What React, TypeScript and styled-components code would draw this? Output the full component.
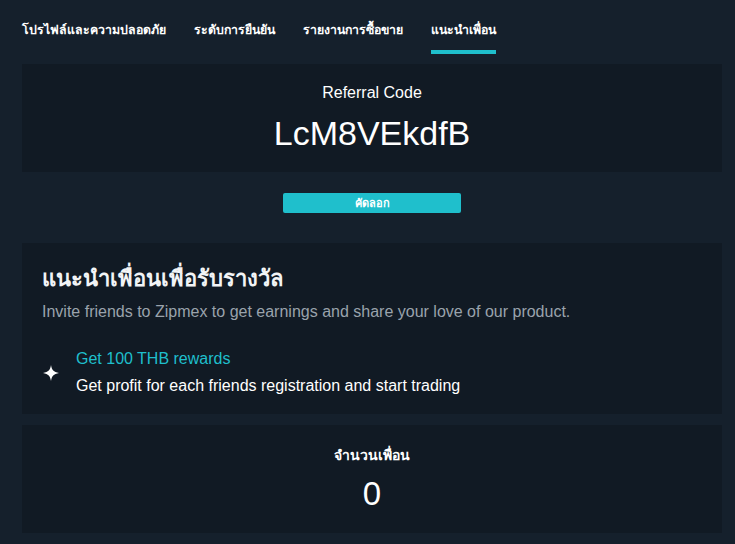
import React from "react";
import styled, { createGlobalStyle } from "styled-components";

const GlobalStyle = createGlobalStyle`
  html, body {
    margin: 0;
    padding: 0;
    background: #15202c;
  }
  body {
    font-family: "Liberation Sans", Arial, "Noto Sans", sans-serif;
    color: #ffffff;
  }
  * {
    box-sizing: border-box;
  }
`;

const tabs = [
  "โปรไฟล์และความปลอดภัย",
  "ระดับการยืนยัน",
  "รายงานการซื้อขาย",
  "แนะนำเพื่อน",
];

const Page = styled.div`
  width: 735px;
  min-height: 544px;
  padding: 0 13px 0 22px;
  display: flex;
  flex-direction: column;
`;

const TabBar = styled.nav`
  height: 64px;
  display: flex;
  align-items: flex-start;
  gap: 28px;
`;

const Tab = styled.div<{ active?: boolean }>`
  height: 54px;
  padding-top: 20px;
  font-family: "Noto Sans", "Liberation Sans", sans-serif;
  font-size: 12.3px;
  font-weight: 700;
  color: #ffffff;
  border-bottom: 4px solid ${({ active }) => (active ? "#1fbfcc" : "transparent")};
  white-space: nowrap;
`;

const Card = styled.section<{ align?: string }>`
  background: #111a24;
  display: flex;
  flex-direction: column;
  align-items: ${({ align }) => align || "center"};
`;

const CodeCard = styled(Card)`
  height: 108px;
  padding-top: 20px;
`;

const Label = styled.div`
  font-size: 16px;
  color: #ffffff;
  line-height: 18px;
`;

const Code = styled.div`
  font-size: 34px;
  line-height: 40px;
  margin-top: 11px;
  color: #ffffff;
`;

const ButtonRow = styled.div`
  height: 71px;
  display: flex;
  justify-content: center;
  padding-top: 21px;
`;

const CopyButton = styled.button`
  width: 178px;
  height: 20px;
  border: none;
  border-radius: 2px;
  background: #1fbfcc;
  color: #ffffff;
  font-family: "Noto Sans", "Liberation Sans", sans-serif;
  font-size: 11px;
  font-weight: 700;
  padding: 0;
  line-height: 20px;
`;

const InviteCard = styled(Card)`
  height: 171px;
  padding: 20px 20px 0 20px;
`;

const Heading = styled.h2`
  margin: 0;
  font-family: "Noto Sans", "Liberation Sans", sans-serif;
  font-size: 22px;
  font-weight: 700;
  line-height: 28px;
  color: #f2f4f6;
`;

const Sub = styled.p`
  margin: 12px 0 0;
  font-size: 16px;
  line-height: 18px;
  color: #9aa3ac;
`;

const Perk = styled.div`
  display: flex;
  align-items: center;
  gap: 16px;
  margin-top: 29px;
`;

const PerkText = styled.div`
  display: flex;
  flex-direction: column;
  gap: 9px;
`;

const PerkTitle = styled.div`
  font-size: 16px;
  line-height: 18px;
  color: #1fbfcc;
`;

const PerkBody = styled.div`
  font-size: 16px;
  line-height: 18px;
  color: #ffffff;
`;

const FriendsCard = styled(Card)`
  height: 108px;
  margin-top: 11px;
  padding-top: 20px;
`;

const FriendsLabel = styled.div`
  font-family: "Noto Sans", "Liberation Sans", sans-serif;
  font-size: 14px;
  font-weight: 700;
  line-height: 20px;
  color: #ffffff;
`;

const Count = styled.div`
  font-size: 33px;
  line-height: 38px;
  margin-top: 10px;
  color: #ffffff;
`;

const Sparkle = () => (
  <svg width="18" height="18" viewBox="0 0 18 18">
    <path
      d="M9 1 C9.8 6 11.5 8 17 9 C11.5 10 9.8 12 9 17 C8.2 12 6.5 10 1 9 C6.5 8 8.2 6 9 1 Z"
      fill="#ffffff"
    />
  </svg>
);

const App: React.FC = () => {
  return (
    <>
      <GlobalStyle />
      <Page>
        <TabBar>
          {tabs.map((t, i) => (
            <Tab key={t} active={i === tabs.length - 1}>
              {t}
            </Tab>
          ))}
        </TabBar>
        <CodeCard>
          <Label>Referral Code</Label>
          <Code>LcM8VEkdfB</Code>
        </CodeCard>
        <ButtonRow>
          <CopyButton>คัดลอก</CopyButton>
        </ButtonRow>
        <InviteCard align="flex-start">
          <Heading>แนะนำเพื่อนเพื่อรับรางวัล</Heading>
          <Sub>
            Invite friends to Zipmex to get earnings and share your love of our
            product.
          </Sub>
          <Perk>
            <Sparkle />
            <PerkText>
              <PerkTitle>Get 100 THB rewards</PerkTitle>
              <PerkBody>
                Get profit for each friends registration and start trading
              </PerkBody>
            </PerkText>
          </Perk>
        </InviteCard>
        <FriendsCard>
          <FriendsLabel>จำนวนเพื่อน</FriendsLabel>
          <Count>0</Count>
        </FriendsCard>
      </Page>
    </>
  );
};

export default App;
